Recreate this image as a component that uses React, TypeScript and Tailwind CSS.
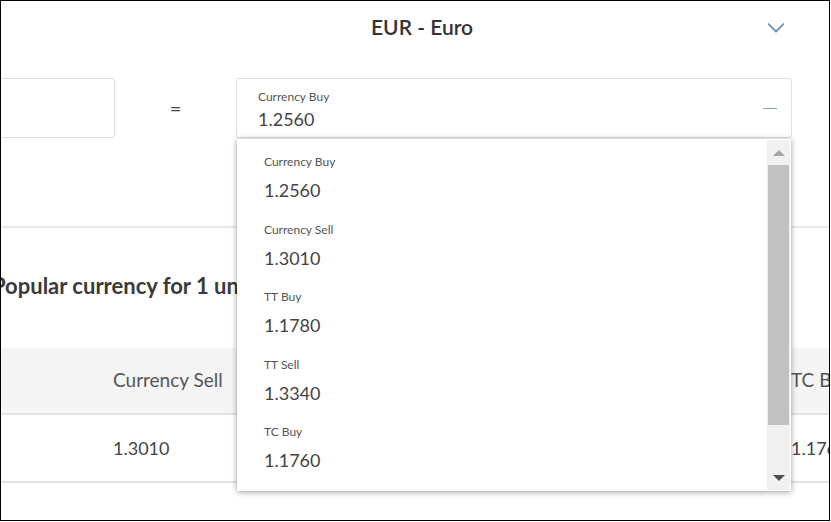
import React from "react";

interface Rate {
  label: string;
  value: string;
}

const rates: Rate[] = [
  { label: "Currency Buy", value: "1.2560" },
  { label: "Currency Sell", value: "1.3010" },
  { label: "TT Buy", value: "1.1780" },
  { label: "TT Sell", value: "1.3340" },
  { label: "TC Buy", value: "1.1760" },
];

// the table is scrolled sideways, first column sits off-screen
const tableCols = rates.slice(1);

const ChevronDown = () => (
  <svg width="18" height="11" viewBox="0 0 18 11" fill="none">
    <path d="M1 1.5l8 8 8-8" stroke="#5d86ad" strokeWidth="1.6" />
  </svg>
);

const RateDropdown: React.FC = () => (
  <div className="absolute left-0 top-[60px] z-10 flex h-[352px] w-[554px] bg-white shadow-[0_1px_6px_rgba(0,0,0,0.4)]">
    <div className="flex-1 overflow-hidden pl-[27px]">
      {rates.map((r) => (
        <div key={r.label} className="h-[67.5px] shrink-0 pt-[14px]">
          <div className="text-[12px] leading-[18px] text-[#555]">{r.label}</div>
          <div className="mt-[7px] text-[18px] leading-[24px] text-[#444]">{r.value}</div>
        </div>
      ))}
    </div>
    {/* scrollbar */}
    <div className="mr-[1px] mt-[1px] mb-[1px] flex w-[23px] flex-col bg-[#f1f1f1]">
      <div className="flex h-[25px] items-center justify-center">
        <div className="h-0 w-0 border-x-[6px] border-b-[6px] border-x-transparent border-b-[#a3a3a3]" />
      </div>
      <div className="mx-[1px] h-[260px] bg-[#c1c1c1]" />
      <div className="flex-1" />
      <div className="flex h-[25px] items-center justify-center">
        <div className="h-0 w-0 border-x-[6px] border-t-[6px] border-x-transparent border-t-[#505050]" />
      </div>
    </div>
  </div>
);

const App: React.FC = () => {
  return (
    <div className="relative h-[521px] w-[830px] overflow-hidden border border-black bg-white font-['Lato','Noto_Sans',sans-serif]">
      {/* header */}
      <div className="flex h-[52px] items-center">
        <h2 className="ml-[370px] text-[21px] font-semibold text-[#333]">EUR - Euro</h2>
        <div className="ml-auto mr-[44px] flex items-center">
          <ChevronDown />
        </div>
      </div>

      {/* converter row */}
      <div className="mt-[25px] flex h-[60px]">
        <div className="-ml-[60px] w-[174px] rounded-[3px] border border-[#e0e0e0]" />
        <div className="flex w-[121px] items-center justify-center text-[20px] text-[#444]">=</div>
        <div className="relative flex w-[556px] items-center rounded-[2px] border border-[#e0e0e0]">
          <div className="flex-1 self-start pl-[21px] pt-[10px]">
            <div className="text-[12px] leading-[16px] text-[#555]">Currency Buy</div>
            <div className="mt-[2px] text-[18px] leading-[24px] text-[#444]">1.2560</div>
          </div>
          <span className="mr-[14px] h-[1px] w-[14px] bg-[#7fa3c6]" />
          <RateDropdown />
        </div>
      </div>

      <div className="mt-[88px] h-[2px] bg-[#e8e8e8]" />

      <h3 className="-ml-[9px] mt-[44px] whitespace-nowrap text-[22px] font-bold leading-[28px] text-[#3a3a3a]">
        Popular currency for 1 un
      </h3>

      {/* table */}
      <div className="mt-[48px]">
        <div className="flex h-[65px] items-center bg-[#f5f5f5] pl-[112px] text-[19px] text-[#555]">
          {tableCols.map((r) => (
            <div key={r.label} className="w-[226px] shrink-0 whitespace-nowrap">
              {r.label}
            </div>
          ))}
        </div>
        <div className="h-[2px] bg-[#e3e3e3]" />
        <div className="flex h-[66px] items-center pl-[112px] text-[18px] text-[#444]">
          {tableCols.map((r) => (
            <div key={r.label} className="w-[226px] shrink-0">
              {r.value}
            </div>
          ))}
        </div>
        <div className="h-[2px] bg-[#e3e3e3]" />
      </div>
    </div>
  );
};

export default App;
